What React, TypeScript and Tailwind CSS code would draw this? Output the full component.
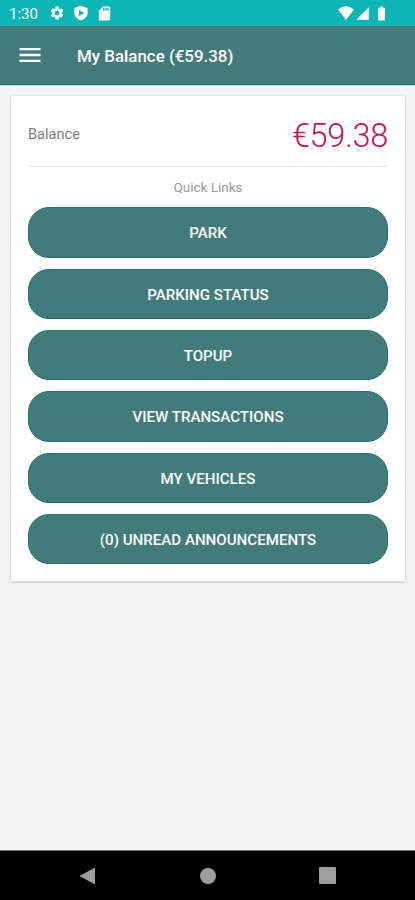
import { MdBatteryFull, MdMenu, MdSdCard, MdSettings, MdSignalCellular4Bar } from 'react-icons/md'

const links = [
  'PARK',
  'PARKING STATUS',
  'TOPUP',
  'VIEW TRANSACTIONS',
  'MY VEHICLES',
  '(0) UNREAD ANNOUNCEMENTS',
]

function StatusBar() {
  return (
    <div className="flex h-[26px] items-center bg-[#0eb5b5] pr-[25px] pl-[9px] text-white">
      <span className="w-10 pt-[3px] text-[15px] leading-none">1:30</span>
      <MdSettings className="size-4" />
      <svg viewBox="0 0 24 24" className="ml-2 size-4" fill="currentColor">
        <path
          fillRule="evenodd"
          d="M12 1 2 4.500v7C2 17 6.500 21.600 12 23c5.500-1.400 10-6 10-11.500v-7L12 1zM9 7.500l8 4.500-8 4.500v-9z"
        />
      </svg>
      <MdSdCard className="ml-[7px] size-[17px]" />
      <div className="ml-auto flex items-center">
        <svg viewBox="0 0 16 14" className="h-[14px] w-4" fill="currentColor">
          <path d="M8 14 0 3.500Q8-3 16 3.500z" />
        </svg>
        <MdSignalCellular4Bar className="ml-px size-[15px]" />
        <MdBatteryFull className="ml-[3px] size-[17px]" />
      </div>
    </div>
  )
}

function Header() {
  return (
    <header className="flex h-[59px] items-center border-b border-[#1c6968] bg-[#427c7a] pl-4 text-white">
      <MdMenu className="size-7" />
      <h1 className="ml-[33px] pt-[3px] text-[16.9px] font-medium">My Balance (€59.38)</h1>
    </header>
  )
}

function NavBar() {
  return (
    <nav className="flex h-[50px] items-center justify-between border-t border-[#777] bg-black px-[79px] text-[#9e9e9e]">
      <svg viewBox="0 0 17 18" className="h-[18px] w-[17px]" fill="currentColor">
        <path d="M0.500 9 16 0.500v17z" />
      </svg>
      <div className="size-4 rounded-full bg-current" />
      <div className="size-[17px] rounded-[1px] bg-current" />
    </nav>
  )
}

export default function App() {
  return (
    <div className="flex h-[900px] w-full flex-col overflow-hidden bg-[#f4f4f4] font-['Roboto',sans-serif]">
      <StatusBar />
      <Header />
      <main className="flex-1 border-t border-[#bdf1ef] pt-[10px] pr-[10px] pl-[11px]">
        <section className="h-[485px] bg-white px-[17px] shadow-[0_1px_2px_1px_rgba(0,0,0,0.12)]">
          <div className="flex h-[71px] items-center justify-between border-b border-[#e8e8e8] pt-2">
            <span className="text-[14.6px] text-[#808080]">Balance</span>
            <span className="pt-[3px] text-[32.5px] font-[350] tracking-[-0.3px] text-[#c51550]">€59.38</span>
          </div>
          <p className="h-[40.4px] pt-[10px] text-center text-[13.5px] leading-5 text-[#999]">Quick Links</p>
          <div className="flex flex-col gap-[10.8px]">
            {links.map((label) => (
              <button
                key={label}
                className="h-[50.5px] w-full rounded-[21px] border border-[#247270] bg-[#427c7a] pt-[2px] text-[15.1px] font-medium text-white"
              >
                {label}
              </button>
            ))}
          </div>
        </section>
      </main>
      <NavBar />
    </div>
  )
}
